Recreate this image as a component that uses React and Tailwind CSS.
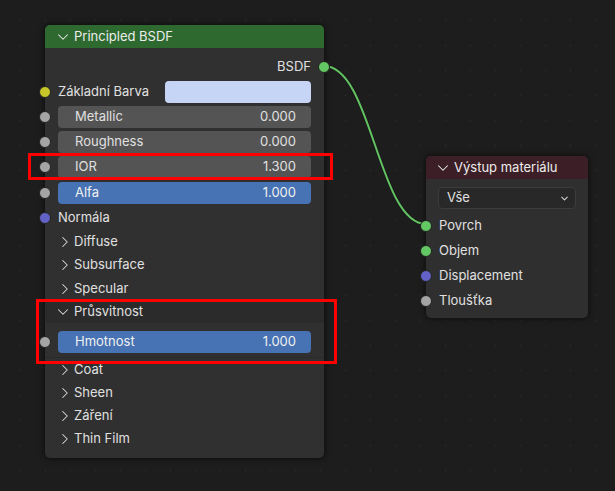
import { ChevronDown, ChevronRight } from 'lucide-react'

const font = { fontFamily: 'Inter, "Noto Sans", sans-serif' }

function Socket({ color, side = 'left' }) {
  return (
    <span
      className={`absolute top-1/2 -translate-y-1/2 h-[12px] w-[12px] rounded-full border border-[#222222] ${side === 'left' ? '-left-[6px]' : '-right-[6px]'}`}
      style={{ backgroundColor: color }}
    />
  )
}

function Field({ label, value, blue, h = 'h-[25px]' }) {
  return (
    <div className={`relative ${h} flex items-center px-[13px]`}>
      <Socket color="#a5a5a5" />
      <div
        className={`flex-1 h-[22px] rounded-[4px] flex items-center justify-between pl-[17px] pr-[15px] text-[13px] ${
          blue ? 'bg-[#4772b3] text-[#f0f0f0]' : 'bg-[#545454] text-[#e0e0e0]'
        }`}
      >
        <span>{label}</span>
        <span>{value}</span>
      </div>
    </div>
  )
}

function Panel({ label, h = 'h-[23px]' }) {
  return (
    <div className={`${h} flex items-center pl-[11px] text-[13px] text-[#e0e0e0]`}>
      <ChevronRight size={18} strokeWidth={1.4} className="text-[#dadada]" />
      <span>{label}</span>
    </div>
  )
}

function PrincipledNode() {
  return (
    <div className="absolute left-[45px] top-[25px] w-[279px] h-[433px] rounded-[5px] bg-[#303030] shadow-[0_0_6px_rgba(0,0,0,0.7)] flex flex-col">
      <div className="h-[23px] rounded-t-[5px] bg-[#2e6a30] flex items-center pl-[9px] gap-[2px] text-[13px] text-[#ececec]">
        <ChevronDown size={18} strokeWidth={1.4} />
        <span>Principled BSDF</span>
      </div>
      <div className="pt-[7px] flex flex-col">
        <div className="relative h-[24px] flex items-center justify-end pr-[13px] text-[13px] text-[#e0e0e0]">
          <span>BSDF</span>
          <Socket color="#63c763" side="right" />
        </div>
        <div className="relative h-[25px] flex items-center px-[13px] text-[13px] text-[#e0e0e0]">
          <Socket color="#c7c729" />
          <span className="w-[107px]">Základní Barva</span>
          <div className="flex-1 h-[22px] rounded-[4px] bg-[#c6d5f6]" />
        </div>
        <Field label="Metallic" value="0.000" />
        <Field label="Roughness" value="0.000" />
        <Field label="IOR" value="1.300" h="h-[26px]" />
        <Field label="Alfa" value="1.000" blue />
        <div className="relative h-[26px] flex items-center px-[13px] text-[13px] text-[#e0e0e0]">
          <Socket color="#6363c7" />
          <span>Normála</span>
        </div>
        <Panel label="Diffuse" h="h-[22px]" />
        <Panel label="Subsurface" h="h-[24px]" />
        <Panel label="Specular" />
        <div className="h-[23px] flex items-center pl-[9px] gap-[2px] text-[13px] text-[#e0e0e0] bg-[#2b2b2b]">
          <ChevronDown size={18} strokeWidth={1.4} className="text-[#dadada]" />
          <span>Průsvitnost</span>
        </div>
        <div className="pt-[8px] pb-[4px] border-b border-[#2a2a2a]">
          <div className="relative h-[22px] flex items-center px-[13px]">
            <Socket color="#a5a5a5" />
            <div className="flex-1 h-[22px] rounded-[4px] bg-[#4772b3] flex items-center justify-between pl-[17px] pr-[15px] text-[13px] text-[#f0f0f0]">
              <span>Hmotnost</span>
              <span>1.000</span>
            </div>
          </div>
        </div>
        <Panel label="Coat" />
        <Panel label="Sheen" />
        <Panel label="Záření" />
        <Panel label="Thin Film" h="h-[24px]" />
      </div>
    </div>
  )
}

function OutputNode() {
  const rows = [
    ['Povrch', '#63c763'],
    ['Objem', '#63c763'],
    ['Displacement', '#6363c7'],
    ['Tloušťka', '#a5a5a5'],
  ]
  return (
    <div className="absolute left-[426px] top-[156px] w-[162px] h-[162px] rounded-[5px] bg-[#2f2f2f] shadow-[0_0_6px_rgba(0,0,0,0.7)] flex flex-col">
      <div className="h-[23px] rounded-t-[5px] bg-[#3c1f26] flex items-center pl-[8px] gap-[2px] text-[13px] text-[#ececec]">
        <ChevronDown size={18} strokeWidth={1.4} />
        <span>Výstup materiálu</span>
      </div>
      <div className="px-[12px] pt-[8px]">
        <div className="h-[22px] rounded-[4px] bg-[#282828] border border-[#3c3c3c] flex items-center justify-between pl-[8px] pr-[5px] text-[13px] text-[#e0e0e0]">
          <span>Vše</span>
          <ChevronDown size={11} strokeWidth={2.2} className="text-[#d8d8d8]" />
        </div>
      </div>
      <div className="pt-[4px] flex flex-col">
        {rows.map(([label, color]) => (
          <div key={label} className="relative h-[25px] flex items-center pl-[13px] text-[13px] text-[#e0e0e0]">
            <Socket color={color} />
            <span>{label}</span>
          </div>
        ))}
      </div>
    </div>
  )
}

export default function App() {
  return (
    <div
      className="relative w-[615px] h-[491px] overflow-hidden bg-[#1d1d1d] bg-[radial-gradient(circle,#232323_1px,transparent_1.2px)] bg-[length:25px_25px] bg-[position:8px_8px]"
      style={font}
    >
      <svg className="absolute inset-0" width="615" height="491">
        <path d="M324 66 C 372 66, 378 224, 426 224" fill="none" stroke="#1a1a1a" strokeWidth="4" />
        <path d="M324 66 C 372 66, 378 224, 426 224" fill="none" stroke="#62c262" strokeWidth="2" />
      </svg>
      <PrincipledNode />
      <OutputNode />
      <div className="absolute left-[28px] top-[153px] w-[305px] h-[27px] border-[3px] border-[#ff0000]" />
      <div className="absolute left-[36px] top-[299px] w-[301px] h-[65px] border-[3px] border-[#ff0000]" />
    </div>
  )
}
